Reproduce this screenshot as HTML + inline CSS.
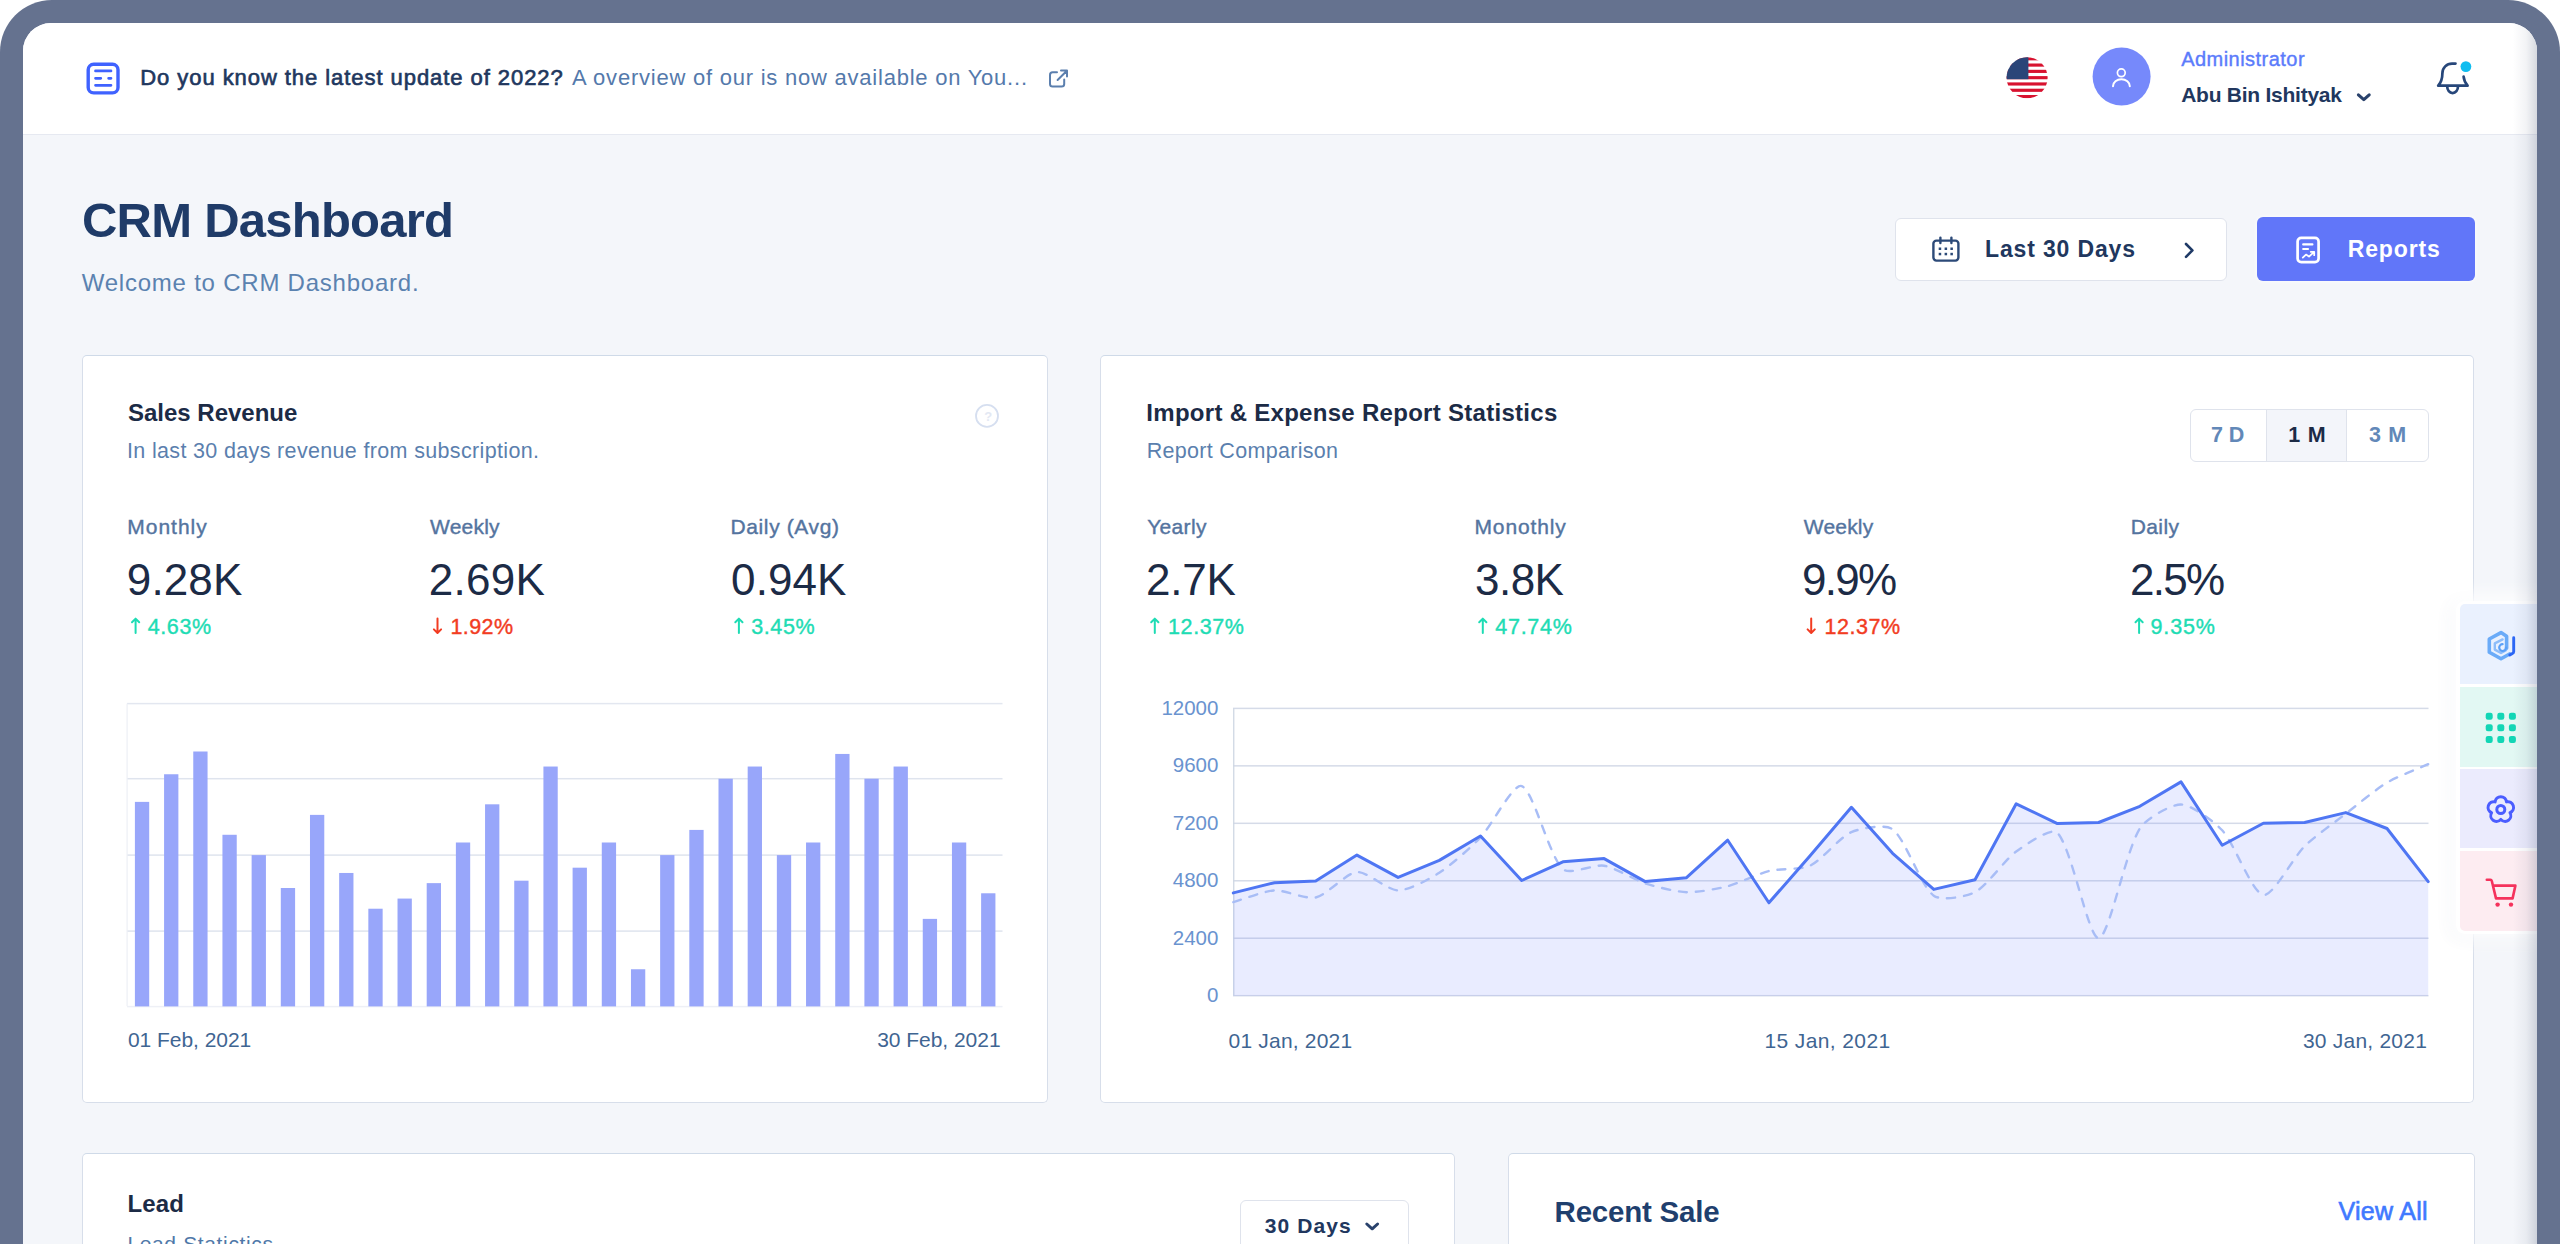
<!DOCTYPE html>
<html lang="en">
<head>
<meta charset="utf-8">
<title>CRM Dashboard</title>
<style>
*{box-sizing:border-box;margin:0;padding:0}
html,body{width:2560px;height:1244px;overflow:hidden;background:#fff}
body{font-family:"Liberation Sans",sans-serif;position:relative}
.frame{position:absolute;left:0;top:0;width:2560px;height:1400px;border-radius:52px;background:#65728f}
.screen{position:absolute;left:23px;top:23px;width:2514px;height:1400px;border-radius:28px;background:#f4f6fa;overflow:hidden}
.hdr{position:absolute;left:0;top:0;width:2514px;height:112px;background:#fff;border-bottom:1.5px solid #e6e9f1}
.rshade{position:absolute;right:0;top:0;width:24px;height:1400px;background:linear-gradient(to right,rgba(115,125,150,0),rgba(115,125,150,.09) 55%,rgba(105,115,140,.27))}
.abs{position:absolute;left:0;top:0;width:2560px;height:1244px;overflow:hidden}
.t{position:absolute;white-space:nowrap;line-height:1;display:block}
.card{position:absolute;background:#fff;border:1.5px solid #d7deea;border-top-color:#cfdae8;border-radius:5px}
.btn{position:absolute;border-radius:6px}
svg{position:absolute;left:0;top:0;overflow:visible}
</style>
</head>
<body>
<div class="frame"></div>
<div class="screen">
  <div class="hdr"></div>
</div>
<div class="abs">
  <!-- cards -->
  <div class="card" style="left:81.5px;top:354.6px;width:966.2px;height:748px"></div>
  <div class="card" style="left:1100.1px;top:354.6px;width:1374.3px;height:748px"></div>
  <div class="card" style="left:81.5px;top:1153.4px;width:1373.8px;height:300px"></div>
  <div class="card" style="left:1507.5px;top:1153.4px;width:967px;height:300px"></div>
  <!-- buttons -->
  <div class="btn" style="left:1894.5px;top:217.5px;width:332px;height:63.5px;background:#fff;border:1.5px solid #dfe3ec"></div>
  <div class="btn" style="left:2257px;top:217px;width:218px;height:64px;background:#6176f9;box-shadow:0 0 5px rgba(255,255,255,.8)"></div>
  <div class="btn" style="left:2189.5px;top:408.5px;width:239px;height:53px;background:#fff;border:1.5px solid #dfe3ec"></div>
  <div style="position:absolute;left:2266px;top:409.5px;width:80.5px;height:51px;background:#f3f5fa;border-left:1.5px solid #dfe3ec;border-right:1.5px solid #dfe3ec"></div>
  <div class="btn" style="left:1240px;top:1199.5px;width:169px;height:60px;background:#fff;border:1.5px solid #dfe3ec"></div>

  <svg width="2560" height="1244" viewBox="0 0 2560 1244">
    <g id="bars">
<rect x="127" y="702.85" width="875.5" height="1.5" fill="#e3e7f0"/>
<rect x="127" y="777.95" width="875.5" height="1.5" fill="#dfe4ee"/>
<rect x="127" y="854.35" width="875.5" height="1.5" fill="#dfe4ee"/>
<rect x="127" y="930.35" width="875.5" height="1.5" fill="#dfe4ee"/>
<rect x="127" y="1005.85" width="875.5" height="1.5" fill="#eef0f6"/>
<rect x="126.5" y="703.6" width="1.2" height="302.6" fill="#edf0f6"/>
<rect x="134.90" y="801.88" width="14.3" height="204.52" fill="#98a6fa"/>
<rect x="164.08" y="774.25" width="14.3" height="232.15" fill="#98a6fa"/>
<rect x="193.26" y="751.50" width="14.3" height="254.90" fill="#98a6fa"/>
<rect x="222.44" y="834.78" width="14.3" height="171.62" fill="#98a6fa"/>
<rect x="251.62" y="855.10" width="14.3" height="151.30" fill="#98a6fa"/>
<rect x="280.80" y="888.00" width="14.3" height="118.40" fill="#98a6fa"/>
<rect x="309.98" y="814.88" width="14.3" height="191.52" fill="#98a6fa"/>
<rect x="339.16" y="872.97" width="14.3" height="133.43" fill="#98a6fa"/>
<rect x="368.34" y="908.72" width="14.3" height="97.68" fill="#98a6fa"/>
<rect x="397.52" y="898.57" width="14.3" height="107.83" fill="#98a6fa"/>
<rect x="426.70" y="883.13" width="14.3" height="123.27" fill="#98a6fa"/>
<rect x="455.88" y="842.50" width="14.3" height="163.90" fill="#98a6fa"/>
<rect x="485.06" y="804.31" width="14.3" height="202.09" fill="#98a6fa"/>
<rect x="514.24" y="880.69" width="14.3" height="125.71" fill="#98a6fa"/>
<rect x="543.42" y="766.53" width="14.3" height="239.87" fill="#98a6fa"/>
<rect x="572.60" y="867.69" width="14.3" height="138.71" fill="#98a6fa"/>
<rect x="601.78" y="842.50" width="14.3" height="163.90" fill="#98a6fa"/>
<rect x="630.96" y="969.25" width="14.3" height="37.15" fill="#98a6fa"/>
<rect x="660.14" y="855.10" width="14.3" height="151.30" fill="#98a6fa"/>
<rect x="689.32" y="829.91" width="14.3" height="176.49" fill="#98a6fa"/>
<rect x="718.50" y="778.72" width="14.3" height="227.68" fill="#98a6fa"/>
<rect x="747.68" y="766.53" width="14.3" height="239.87" fill="#98a6fa"/>
<rect x="776.86" y="855.10" width="14.3" height="151.30" fill="#98a6fa"/>
<rect x="806.04" y="842.50" width="14.3" height="163.90" fill="#98a6fa"/>
<rect x="835.22" y="753.94" width="14.3" height="252.46" fill="#98a6fa"/>
<rect x="864.40" y="778.72" width="14.3" height="227.68" fill="#98a6fa"/>
<rect x="893.58" y="766.53" width="14.3" height="239.87" fill="#98a6fa"/>
<rect x="922.76" y="918.88" width="14.3" height="87.52" fill="#98a6fa"/>
<rect x="951.94" y="842.50" width="14.3" height="163.90" fill="#98a6fa"/>
<rect x="981.12" y="893.28" width="14.3" height="113.12" fill="#98a6fa"/>
    </g>
    <g id="lines">
<rect x="1233" y="707.65" width="1195.5" height="1.5" fill="#d5dbe8"/>
<rect x="1233" y="765.11" width="1195.5" height="1.5" fill="#d5dbe8"/>
<rect x="1233" y="822.57" width="1195.5" height="1.5" fill="#d5dbe8"/>
<rect x="1233" y="880.03" width="1195.5" height="1.5" fill="#d5dbe8"/>
<rect x="1233" y="937.49" width="1195.5" height="1.5" fill="#d5dbe8"/>
<rect x="1233" y="994.95" width="1195.5" height="1.5" fill="#d5dbe8"/>
<rect x="1233.1" y="708.4" width="1.3" height="287.3" fill="#cfd8e4"/>
<path d="M1233.3,892.9 L1274.5,882.7 L1315.7,880.9 L1356.9,855.1 L1398.1,877.4 L1439.3,860.4 L1480.5,836.0 L1521.7,880.5 L1562.9,861.8 L1604.1,858.6 L1645.3,881.6 L1686.5,877.7 L1727.7,840.2 L1768.9,902.8 L1810.1,855.8 L1851.4,807.3 L1892.6,853.3 L1933.8,889.4 L1975.0,879.8 L2016.2,803.8 L2057.4,823.6 L2098.6,822.5 L2139.8,806.3 L2181.0,781.9 L2222.2,845.2 L2263.4,823.2 L2304.6,822.5 L2345.8,812.6 L2387.0,828.5 L2428.2,881.6 L2428.2,995.7 L1233.3,995.7 Z" fill="#6576ff" fill-opacity="0.14"/>
<path d="M1233.3,902.1 C1243.6,899.2 1264.1,891.0 1274.5,890.4 C1284.7,889.9 1306.2,899.6 1315.7,897.5 C1326.8,895.0 1346.2,873.0 1356.9,872.0 C1366.8,871.2 1387.8,890.4 1398.1,890.4 C1408.4,890.5 1430.0,878.8 1439.3,872.8 C1450.6,865.5 1471.2,847.2 1480.5,837.4 C1491.8,825.5 1513.2,782.8 1521.7,786.1 C1533.8,790.8 1548.7,855.5 1562.9,869.2 C1569.3,875.4 1594.2,864.0 1604.1,865.7 C1614.8,867.5 1634.7,879.9 1645.3,883.4 C1655.3,886.6 1676.2,891.9 1686.5,892.2 C1696.8,892.6 1717.7,888.8 1727.7,886.2 C1738.3,883.5 1758.4,873.6 1768.9,871.0 C1779.0,868.5 1801.1,869.9 1810.1,865.7 C1821.7,860.2 1839.8,837.2 1851.4,832.1 C1860.4,828.1 1885.4,823.8 1892.6,829.3 C1906.0,839.7 1920.3,885.5 1933.8,895.7 C1940.9,901.2 1966.4,896.8 1975.0,892.2 C1987.0,885.8 2004.6,859.9 2016.2,851.5 C2025.2,845.0 2051.5,826.6 2057.4,832.8 C2072.1,848.3 2088.4,938.7 2098.6,938.2 C2109.1,937.6 2125.1,852.3 2139.8,828.5 C2145.7,818.9 2170.8,804.3 2181.0,804.5 C2191.4,804.7 2214.2,821.5 2222.2,830.3 C2234.8,844.2 2252.1,892.9 2263.4,895.0 C2272.7,896.8 2293.3,857.4 2304.6,846.2 C2313.9,837.1 2335.4,821.7 2345.8,813.7 C2356.0,805.8 2376.0,789.2 2387.0,782.6 C2396.6,776.8 2417.9,768.8 2428.2,764.2" fill="none" stroke="#a8bdf6" stroke-width="2.4" stroke-dasharray="8 9" stroke-linecap="round"/>
<path d="M1233.3,892.9 L1274.5,882.7 L1315.7,880.9 L1356.9,855.1 L1398.1,877.4 L1439.3,860.4 L1480.5,836.0 L1521.7,880.5 L1562.9,861.8 L1604.1,858.6 L1645.3,881.6 L1686.5,877.7 L1727.7,840.2 L1768.9,902.8 L1810.1,855.8 L1851.4,807.3 L1892.6,853.3 L1933.8,889.4 L1975.0,879.8 L2016.2,803.8 L2057.4,823.6 L2098.6,822.5 L2139.8,806.3 L2181.0,781.9 L2222.2,845.2 L2263.4,823.2 L2304.6,822.5 L2345.8,812.6 L2387.0,828.5 L2428.2,881.6" fill="none" stroke="#4f76f3" stroke-width="3" stroke-linejoin="round" stroke-linecap="round"/>
    </g>
    <g id="icons">
<!-- news icon -->
<rect x="88.2" y="64.3" width="29.8" height="28.6" rx="5.5" fill="none" stroke="#3f62ff" stroke-width="3.4"/>
<path d="M95.5 70.9H111 M95.5 78.3H100.8 M108.6 78.3H111 M95.5 85.3H111" stroke="#3f62ff" stroke-width="2.7" stroke-linecap="round" fill="none"/>
<!-- external link -->
<path d="M1057 72.3H1052.6a2.6 2.6 0 0 0 -2.6 2.6V84a2.6 2.6 0 0 0 2.6 2.6H1061.6a2.6 2.6 0 0 0 2.6 -2.6V79.6" fill="none" stroke="#5b7fae" stroke-width="2" stroke-linecap="round"/>
<path d="M1061 70.6H1067V76.6 M1066.6 71L1057.6 80" fill="none" stroke="#5b7fae" stroke-width="2" stroke-linecap="round" stroke-linejoin="round"/>
<!-- flag -->
<defs><clipPath id="fc"><circle cx="2027.1" cy="77.7" r="20.5"/></clipPath></defs>
<g clip-path="url(#fc)">
<rect x="2006" y="57" width="42" height="42" fill="#fff"/>
<g fill="#d8122f">
<rect x="2006" y="57.2" width="42" height="3.15"/><rect x="2006" y="63.5" width="42" height="3.15"/><rect x="2006" y="69.8" width="42" height="3.15"/><rect x="2006" y="76.1" width="42" height="3.15"/><rect x="2006" y="82.4" width="42" height="3.15"/><rect x="2006" y="88.7" width="42" height="3.15"/><rect x="2006" y="95" width="42" height="3.3"/>
</g>
<rect x="2006" y="57" width="22.4" height="22.2" fill="#2b4578"/>
</g>
<!-- avatar -->
<circle cx="2121.6" cy="76.5" r="29" fill="#7689fb"/>
<circle cx="2121.3" cy="72.8" r="3.9" fill="none" stroke="#fff" stroke-width="1.7"/>
<path d="M2113 86.2a8.4 7 0 0 1 16.8 0" fill="none" stroke="#fff" stroke-width="2" stroke-linecap="round"/>
<!-- chevron down name -->
<path d="M2358.4 94.8L2363.8 99.6L2369.2 94.8" fill="none" stroke="#2a426c" stroke-width="3.1" stroke-linecap="round" stroke-linejoin="round"/>
<!-- bell -->
<path d="M2455.5 63.6H2452a9.6 9.6 0 0 0 -9.6 9.6c0 6.5 -1.6 9.5 -4.2 12.5H2467.6c-2 -2.3 -3.6 -5 -4 -9" fill="none" stroke="#27477a" stroke-width="2.7" stroke-linecap="round" stroke-linejoin="round"/>
<path d="M2447.2 86.5a5.4 6.6 0 0 0 10.8 0" fill="none" stroke="#27477a" stroke-width="2.7" stroke-linecap="round"/>
<circle cx="2465.9" cy="66.6" r="5.4" fill="#0fbdf0"/>
<!-- calendar -->
<rect x="1933.4" y="240.6" width="25" height="20" rx="3" fill="none" stroke="#2c4a78" stroke-width="2.4"/>
<path d="M1940.4 237.6V243 M1951.4 237.6V243" stroke="#2c4a78" stroke-width="2.4" stroke-linecap="round"/>
<g fill="#2c4a78"><rect x="1938.7" y="247.5" width="2.5" height="2.5"/><rect x="1944.6" y="247.5" width="2.5" height="2.5"/><rect x="1950.4" y="247.5" width="2.5" height="2.5"/><rect x="1938.7" y="252.8" width="2.5" height="2.5"/><rect x="1944.6" y="252.8" width="2.5" height="2.5"/><rect x="1950.4" y="252.8" width="2.5" height="2.5"/></g>
<!-- chevron right -->
<path d="M2186 244L2192.4 250.4L2186 256.8" fill="none" stroke="#1f3a66" stroke-width="2.6" stroke-linecap="round" stroke-linejoin="round"/>
<!-- reports icon -->
<rect x="2297.6" y="237.9" width="21" height="24.2" rx="3.6" fill="none" stroke="#fff" stroke-width="2.7"/>
<path d="M2303.2 244.4H2312.4 M2303.2 249H2308" stroke="#fff" stroke-width="2.2" stroke-linecap="round"/>
<path d="M2302.8 257.6L2306 254.6L2309 256.6L2313.6 252.4 M2310.8 251.8H2314.2V255.2" fill="none" stroke="#fff" stroke-width="1.8" stroke-linecap="round" stroke-linejoin="round"/>
<!-- help -->
<circle cx="987" cy="415.9" r="11" fill="none" stroke="#d6dff0" stroke-width="1.8"/>
<!-- 30days chevron -->
<path d="M1366.8 1224L1372.2 1228.8L1377.6 1224" fill="none" stroke="#2a426c" stroke-width="3" stroke-linecap="round" stroke-linejoin="round"/>
<path d="M135.6 633V618.8 M132.0 622.2L135.6 618.6L139.2 622.2" fill="none" stroke="#1edcb4" stroke-width="2" stroke-linecap="round" stroke-linejoin="round"/>
<path d="M437.5 618.6V632.8 M433.9 629.4L437.5 633L441.1 629.4" fill="none" stroke="#f23c22" stroke-width="2" stroke-linecap="round" stroke-linejoin="round"/>
<path d="M738.9 633V618.8 M735.3 622.2L738.9 618.6L742.5 622.2" fill="none" stroke="#1edcb4" stroke-width="2" stroke-linecap="round" stroke-linejoin="round"/>
<path d="M1154.8000000000002 633V618.8 M1151.2000000000003 622.2L1154.8000000000002 618.6L1158.4 622.2" fill="none" stroke="#1edcb4" stroke-width="2" stroke-linecap="round" stroke-linejoin="round"/>
<path d="M1482.8000000000002 633V618.8 M1479.2000000000003 622.2L1482.8000000000002 618.6L1486.4 622.2" fill="none" stroke="#1edcb4" stroke-width="2" stroke-linecap="round" stroke-linejoin="round"/>
<path d="M1811.2 618.6V632.8 M1807.6000000000001 629.4L1811.2 633L1814.8 629.4" fill="none" stroke="#f23c22" stroke-width="2" stroke-linecap="round" stroke-linejoin="round"/>
<path d="M2139.1 633V618.8 M2135.5 622.2L2139.1 618.6L2142.7 622.2" fill="none" stroke="#1edcb4" stroke-width="2" stroke-linecap="round" stroke-linejoin="round"/>
    </g>
  </svg>
<span class="t" id="news_b" style="font-size:22px;font-weight:400;color:#21375e;top:67.13px;-webkit-text-stroke:0.65px;letter-spacing:0.940px;left:140.25px;">Do you know the latest update of 2022?</span>
<span class="t" id="news_r" style="font-size:22px;font-weight:400;color:#5479ab;top:67.13px;letter-spacing:0.769px;left:572.00px;">A overview of our is now available on You...</span>
<span class="t" id="admin" style="font-size:20px;font-weight:400;color:#5b7bfb;top:48.57px;-webkit-text-stroke:0.40px;letter-spacing:0.462px;left:2181.20px;">Administrator</span>
<span class="t" id="uname" style="font-size:21px;font-weight:700;color:#21375e;top:83.72px;letter-spacing:-0.250px;left:2181.20px;">Abu Bin Ishityak</span>
<span class="t" id="title" style="font-size:49px;font-weight:700;color:#1f3b68;top:196.12px;letter-spacing:-0.767px;left:82.00px;">CRM Dashboard</span>
<span class="t" id="sub" style="font-size:24px;font-weight:400;color:#5b82b0;top:271.28px;letter-spacing:0.776px;left:81.70px;">Welcome to CRM Dashboard.</span>
<span class="t" id="last30" style="font-size:23px;font-weight:700;color:#21375e;top:237.53px;letter-spacing:0.841px;left:1985.10px;">Last 30 Days</span>
<span class="t" id="reports" style="font-size:23px;font-weight:700;color:#ffffff;top:237.53px;letter-spacing:0.882px;left:2347.70px;">Reports</span>
<span class="t" id="help" style="font-size:13px;font-weight:700;color:#e3e8f3;top:409.60px;letter-spacing:0.000px;left:984.20px;">?</span>
<span class="t" id="c1t" style="font-size:24px;font-weight:700;color:#1c2b46;top:401.08px;letter-spacing:-0.007px;left:128.00px;">Sales Revenue</span>
<span class="t" id="c1s" style="font-size:21.5px;font-weight:400;color:#5b7fae;top:440.60px;letter-spacing:0.342px;left:127.00px;">In last 30 days revenue from subscription.</span>
<span class="t" id="c1l1" style="font-size:21px;font-weight:400;color:#54749f;top:516.22px;-webkit-text-stroke:0.40px;letter-spacing:1.012px;left:127.20px;">Monthly</span>
<span class="t" id="c1l2" style="font-size:21px;font-weight:400;color:#54749f;top:516.22px;-webkit-text-stroke:0.40px;letter-spacing:0.187px;left:430.10px;">Weekly</span>
<span class="t" id="c1l3" style="font-size:21px;font-weight:400;color:#54749f;top:516.22px;-webkit-text-stroke:0.40px;letter-spacing:0.619px;left:730.50px;">Daily (Avg)</span>
<span class="t" id="c1v1" style="font-size:44px;font-weight:400;color:#1c2b46;top:557.75px;letter-spacing:0.116px;left:126.80px;">9.28K</span>
<span class="t" id="c1v2" style="font-size:44px;font-weight:400;color:#1c2b46;top:557.75px;letter-spacing:0.291px;left:428.70px;">2.69K</span>
<span class="t" id="c1v3" style="font-size:44px;font-weight:400;color:#1c2b46;top:557.75px;letter-spacing:0.066px;left:731.10px;">0.94K</span>
<span class="t" id="c1p1" style="font-size:21.5px;font-weight:400;color:#1edcb4;top:616.60px;-webkit-text-stroke:0.40px;letter-spacing:0.614px;left:147.70px;">4.63%</span>
<span class="t" id="c1p2" style="font-size:21.5px;font-weight:400;color:#f23c22;top:616.60px;-webkit-text-stroke:0.40px;letter-spacing:0.439px;left:450.40px;">1.92%</span>
<span class="t" id="c1p3" style="font-size:21.5px;font-weight:400;color:#1edcb4;top:616.60px;-webkit-text-stroke:0.40px;letter-spacing:0.614px;left:751.20px;">3.45%</span>
<span class="t" id="c1d1" style="font-size:21px;font-weight:400;color:#3f6592;top:1028.52px;letter-spacing:-0.035px;left:127.90px;">01 Feb, 2021</span>
<span class="t" id="c1d2" style="font-size:21px;font-weight:400;color:#3f6592;top:1028.52px;letter-spacing:-0.035px;left:877.20px;">30 Feb, 2021</span>
<span class="t" id="c2t" style="font-size:24px;font-weight:700;color:#1c2b46;top:401.08px;letter-spacing:0.289px;left:1146.30px;">Import &amp; Expense Report Statistics</span>
<span class="t" id="c2s" style="font-size:21.5px;font-weight:400;color:#5b7fae;top:440.60px;letter-spacing:0.309px;left:1146.70px;">Report Comparison</span>
<span class="t" id="b7d" style="font-size:21.5px;font-weight:700;color:#6288b8;top:424.70px;letter-spacing:-0.065px;left:2211.00px;">7 D</span>
<span class="t" id="b1m" style="font-size:21.5px;font-weight:700;color:#1c2b46;top:424.70px;letter-spacing:0.835px;left:2288.20px;">1 M</span>
<span class="t" id="b3m" style="font-size:21.5px;font-weight:700;color:#6288b8;top:424.70px;letter-spacing:0.585px;left:2369.10px;">3 M</span>
<span class="t" id="c2l1" style="font-size:21px;font-weight:400;color:#54749f;top:516.22px;-webkit-text-stroke:0.40px;letter-spacing:0.321px;left:1147.20px;">Yearly</span>
<span class="t" id="c2l2" style="font-size:21px;font-weight:400;color:#54749f;top:516.22px;-webkit-text-stroke:0.40px;letter-spacing:0.870px;left:1474.50px;">Monothly</span>
<span class="t" id="c2l3" style="font-size:21px;font-weight:400;color:#54749f;top:516.22px;-webkit-text-stroke:0.40px;letter-spacing:0.187px;left:1803.80px;">Weekly</span>
<span class="t" id="c2l4" style="font-size:21px;font-weight:400;color:#54749f;top:516.22px;-webkit-text-stroke:0.40px;letter-spacing:0.406px;left:2130.70px;">Daily</span>
<span class="t" id="c2v1" style="font-size:44px;font-weight:400;color:#1c2b46;top:557.75px;letter-spacing:-0.155px;left:1145.90px;">2.7K</span>
<span class="t" id="c2v2" style="font-size:44px;font-weight:400;color:#1c2b46;top:557.75px;letter-spacing:-0.555px;left:1475.10px;">3.8K</span>
<span class="t" id="c2v3" style="font-size:44px;font-weight:400;color:#1c2b46;top:557.75px;letter-spacing:-1.722px;left:1802.00px;">9.9%</span>
<span class="t" id="c2v4" style="font-size:44px;font-weight:400;color:#1c2b46;top:557.75px;letter-spacing:-1.722px;left:2130.00px;">2.5%</span>
<span class="t" id="c2p1" style="font-size:21.5px;font-weight:400;color:#1edcb4;top:616.60px;-webkit-text-stroke:0.40px;letter-spacing:0.560px;left:1168.10px;">12.37%</span>
<span class="t" id="c2p2" style="font-size:21.5px;font-weight:400;color:#1edcb4;top:616.60px;-webkit-text-stroke:0.40px;letter-spacing:0.720px;left:1495.30px;">47.74%</span>
<span class="t" id="c2p3" style="font-size:21.5px;font-weight:400;color:#f23c22;top:616.60px;-webkit-text-stroke:0.40px;letter-spacing:0.560px;left:1824.40px;">12.37%</span>
<span class="t" id="c2p4" style="font-size:21.5px;font-weight:400;color:#1edcb4;top:616.60px;-webkit-text-stroke:0.40px;letter-spacing:0.814px;left:2150.60px;">9.35%</span>
<span class="t" id="c2d1" style="font-size:21px;font-weight:400;color:#3f6592;top:1030.12px;letter-spacing:0.204px;left:1228.50px;">01 Jan, 2021</span>
<span class="t" id="c2d2" style="font-size:21px;font-weight:400;color:#3f6592;top:1030.12px;letter-spacing:0.386px;left:1764.50px;">15 Jan, 2021</span>
<span class="t" id="c2d3" style="font-size:21px;font-weight:400;color:#3f6592;top:1030.12px;letter-spacing:0.231px;left:2302.90px;">30 Jan, 2021</span>
<span class="t" id="lead" style="font-size:24px;font-weight:700;color:#1c2b46;top:1192.08px;letter-spacing:0.148px;left:127.40px;">Lead</span>
<span class="t" id="leads" style="font-size:21px;font-weight:400;color:#4f78a8;top:1233.22px;letter-spacing:0.645px;left:127.40px;">Lead Statictics</span>
<span class="t" id="d30" style="font-size:21px;font-weight:700;color:#21375e;top:1215.02px;letter-spacing:1.114px;left:1264.70px;">30 Days</span>
<span class="t" id="recent" style="font-size:29.5px;font-weight:700;color:#1f3f6e;top:1196.88px;letter-spacing:-0.224px;left:1554.60px;">Recent Sale</span>
<span class="t" id="viewall" style="font-size:25px;font-weight:400;color:#4079ff;top:1198.84px;-webkit-text-stroke:0.65px;letter-spacing:0.284px;left:2338.50px;">View All</span>
<span class="t" id="y0" style="font-size:20.5px;font-weight:400;color:#6a93cf;top:698.00px;left:1161.40px;">12000</span>
<span class="t" id="y1" style="font-size:20.5px;font-weight:400;color:#6a93cf;top:755.46px;left:1172.80px;">9600</span>
<span class="t" id="y2" style="font-size:20.5px;font-weight:400;color:#6a93cf;top:812.92px;left:1172.80px;">7200</span>
<span class="t" id="y3" style="font-size:20.5px;font-weight:400;color:#6a93cf;top:870.38px;left:1172.80px;">4800</span>
<span class="t" id="y4" style="font-size:20.5px;font-weight:400;color:#6a93cf;top:927.84px;left:1172.80px;">2400</span>
<span class="t" id="y5" style="font-size:20.5px;font-weight:400;color:#6a93cf;top:985.30px;left:1207.00px;">0</span>
  <!-- side panel -->
  <div style="position:absolute;left:0;top:0;width:2537.3px;height:1244px;overflow:hidden">
  <div style="position:absolute;left:2456px;top:600.5px;width:90px;height:333.5px;border-radius:9px 0 0 9px;box-shadow:0 0 16px 8px rgba(255,255,255,.9), -4px 3px 16px rgba(60,80,130,.10);background:#fff;overflow:hidden">
    <div style="position:absolute;left:3.5px;top:3.5px;width:90px;height:79.5px;border-radius:5px 0 0 0;background:#eaf1fe"></div>
    <div style="position:absolute;left:3.5px;top:86px;width:90px;height:80px;background:#e2f8f3"></div>
    <div style="position:absolute;left:3.5px;top:168.5px;width:90px;height:79px;background:#ebebfd"></div>
    <div style="position:absolute;left:3.5px;top:250.5px;width:90px;height:79.5px;border-radius:0 0 0 5px;background:#fdecf1"></div>
  </div>
  </div>
  <svg width="2560" height="1244" viewBox="0 0 2560 1244">
<!-- logo hex -->
<g fill="none" stroke-linecap="round" stroke-linejoin="round">
<path d="M2506.6 648.2V636.2L2501 632.6L2489.3 639V652.2L2501 658.8L2509.6 654" stroke="#6aabf8" stroke-width="3.6"/>
<path d="M2502.6 639.4L2494.8 643.4V649.6L2501 653L2506 650.2" stroke="#8dbdfa" stroke-width="2.4"/>
<path d="M2502.6 644.2a3.4 3.4 0 1 0 3.4 3.4" stroke="#5aa0f7" stroke-width="2.2"/>
<path d="M2513.7 637.8V651.4Q2513.7 652.8 2512.4 653.5L2509.8 655" stroke="#2b66f5" stroke-width="2.9"/>
</g>
<!-- grid -->
<g fill="#12d6b5">
<rect x="2485.7" y="712.7" width="7" height="7" rx="2.2"/><rect x="2497.3" y="712.7" width="7" height="7" rx="2.2"/><rect x="2508.9" y="712.7" width="7" height="7" rx="2.2"/>
<rect x="2485.7" y="724.3" width="7" height="7" rx="2.2"/><rect x="2497.3" y="724.3" width="7" height="7" rx="2.2"/><rect x="2508.9" y="724.3" width="7" height="7" rx="2.2"/>
<rect x="2485.7" y="735.9" width="7" height="7" rx="2.2"/><rect x="2497.3" y="735.9" width="7" height="7" rx="2.2"/><rect x="2508.9" y="735.9" width="7" height="7" rx="2.2"/>
</g>
<!-- settings flower -->
<g fill="none" stroke="#4b5dff" stroke-width="3">
<path d="M2495.12,801.88 A5.7,5.7 0 0 1 2506.48,801.88 A5.7,5.7 0 0 1 2510.00,812.69 A5.7,5.7 0 0 1 2500.80,819.37 A5.7,5.7 0 0 1 2491.60,812.69 A5.7,5.7 0 0 1 2495.12,801.88 Z" stroke-linejoin="round"/>
<circle cx="2500.8" cy="809.5" r="4"/>
</g>
<!-- cart -->
<g fill="none" stroke="#f5325c" stroke-width="2.6" stroke-linecap="round" stroke-linejoin="round">
<path d="M2486.8 879.8H2490.2a1.6 1.6 0 0 1 1.6 1.2L2496 898.4H2512.6L2515.4 885.6H2493"/>
</g>
<circle cx="2497.6" cy="904.6" r="2.2" fill="#f5325c"/><circle cx="2511" cy="904.6" r="2.2" fill="#f5325c"/>

  </svg>
</div>
<div class="screen" style="background:none;pointer-events:none"><div class="rshade"></div></div>
</body>
</html>
